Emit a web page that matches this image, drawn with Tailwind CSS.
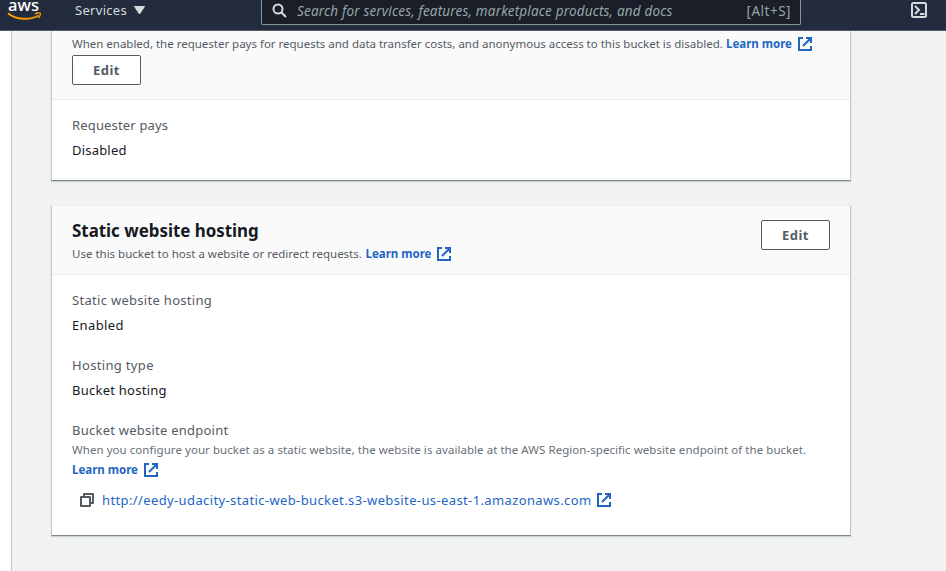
<!DOCTYPE html>
<html lang="en">
<head>
<meta charset="utf-8">
<title>S3 bucket properties</title>
<script src="https://cdn.jsdelivr.net/npm/@tailwindcss/browser@4"></script>
</head>
<body class="w-[946px] h-[571px] overflow-hidden bg-white font-['Noto_Sans',sans-serif] text-[#16191f]">
<svg class="hidden">
  <symbol id="external" viewBox="0 0 14 14"><path d="M5 1H1v12h12V9M8 1h5v5M12.500 1.500L5 9" fill="none" stroke="currentColor" stroke-width="2"/></symbol>
</svg>
<header class="flex h-[31px] bg-[#232c3e] border-b border-[#545b64] overflow-hidden">
  <div class="w-[75px] shrink-0 pl-[7px]">
    <svg class="block" width="36" height="22" viewBox="0 0 36 22">
      <text x="1" y="10.500" font-family="Noto Sans, sans-serif" font-size="16" font-weight="500" fill="#fff" textLength="31" lengthAdjust="spacingAndGlyphs">aws</text>
      <path d="M1 13.200C9 20 23 20.500 31.500 15.500" fill="none" stroke="#f90" stroke-width="2"/>
      <path d="M28 13.800c2-1 5-1 5.300-.5s-.3 3-1.800 4.700" fill="none" stroke="#f90" stroke-width="1.300"/>
    </svg>
  </div>
  <div class="flex w-[186px] shrink-0 gap-[7px] text-[13px] leading-[20px] tracking-[0.3px] text-[#d5dbdb]">
    <span class="w-[52px]">Services</span>
    <svg class="mt-[6px]" width="11" height="9" viewBox="0 0 11 9"><path d="M.5.500h10L5.500 8z" fill="#d5dbdb" stroke="#d5dbdb" stroke-linejoin="round"/></svg>
  </div>
  <div class="flex w-[540px] h-[25px] shrink-0 border border-t-0 border-[#879596] rounded-b-[2px] bg-[#1a1e28] pl-[10px] pr-[9px] text-[13.500px] leading-[22px] text-[#95a5a6]">
    <svg class="mt-[3px] mr-[10px] shrink-0" width="15" height="15" viewBox="0 0 15 15"><g fill="none" stroke="#d5dbdb" stroke-width="2"><circle cx="6" cy="6" r="4.500"/><path d="M9.300 9.300L14 14"/></g></svg>
    <span class="italic whitespace-nowrap tracking-[0.170px]">Search for services, features, marketplace products, and docs</span>
    <span class="ml-auto tracking-[0.500px]">[Alt+S]</span>
  </div>
  <svg class="ml-[110px] mt-[2px] shrink-0" width="16" height="16" viewBox="0 0 16 16"><g fill="none" stroke="#d5dbdb" stroke-width="2"><rect x="1" y="1" width="14" height="14" rx="1.500"/><path d="M4 4l4 4-4 4M9 12h4.500"/></g></svg>
</header>
<main class="ml-[11px] h-[540px] border-l border-[#c3c7c7] bg-[#f1f3f3] pl-[39px]">
  <section class="w-[800px] h-[150px] bg-white border-x border-b border-x-[#c1c8c8] border-b-[#7c8888] shadow-[0_1px_1px_rgba(0,28,36,0.15)]">
    <div class="h-[69px] bg-[#fafafa] border-b border-[#eaeded] px-[20px] pt-[3px]">
      <p class="flex h-[20px] text-[11.500px] leading-[20px] text-[#545b64] whitespace-nowrap">
        <span class="w-[654px] tracking-[-0.010px]">When enabled, the requester pays for requests and data transfer costs, and anonymous access to this bucket is disabled.</span>
        <a class="w-[72px] font-bold text-[#2266c4]">Learn more</a>
        <svg class="mt-[3px] text-[#2266c4]" width="14" height="14"><use href="#external"/></svg>
      </p>
      <button class="mt-[1px] block h-[30px] w-[69px] rounded-[2px] border border-[#545b64] bg-white text-[13px] font-bold leading-[28px] tracking-[0.500px] text-[#545b64]">Edit</button>
    </div>
    <div class="px-[20px] pt-[15px] text-[13px]">
      <div class="leading-[20px] tracking-[0.160px] text-[#545b64]">Requester pays</div>
      <div class="mt-[5px] leading-[20px] tracking-[0.200px]">Disabled</div>
    </div>
  </section>
  <section class="mt-[24px] w-[800px] h-[331px] bg-white border border-t-[#eaeded] border-x-[#c1c8c8] border-b-[#7c8888] shadow-[0_1px_1px_rgba(0,28,36,0.15)]">
    <div class="flex justify-between h-[69px] bg-[#fafafa] border-b border-[#eaeded] pl-[20px] pr-[20px]">
      <div class="pt-[11px]">
        <h2 class="mb-[1px] text-[18px] font-bold leading-[26px] whitespace-nowrap origin-left scale-x-[0.938]">Static website hosting</h2>
        <p class="flex text-[11.500px] leading-[20px] text-[#545b64] whitespace-nowrap">
          <span class="w-[293.500px]">Use this bucket to host a website or redirect requests.</span>
          <a class="w-[71.500px] font-bold text-[#2266c4]">Learn more</a>
          <svg class="mt-[3px] text-[#2266c4]" width="14" height="14"><use href="#external"/></svg>
        </p>
      </div>
      <button class="mt-[14px] block h-[30px] w-[69px] rounded-[2px] border border-[#545b64] bg-white text-[13px] font-bold leading-[28px] tracking-[0.500px] text-[#545b64]">Edit</button>
    </div>
    <div class="flex flex-col gap-[20px] px-[20px] pt-[15px] text-[13px] leading-[20px]">
      <div>
        <div class="tracking-[0.300px] text-[#545b64]">Static website hosting</div>
        <div class="mt-[5px] tracking-[0.380px]">Enabled</div>
      </div>
      <div>
        <div class="tracking-[0.330px] text-[#545b64]">Hosting type</div>
        <div class="mt-[5px] tracking-[0.250px]">Bucket hosting</div>
      </div>
      <div>
        <div class="tracking-[0.240px] text-[#545b64]">Bucket website endpoint</div>
        <p class="text-[11.500px] text-[#687078] whitespace-nowrap tracking-[0.053px]">When you configure your bucket as a static website, the website is available at the AWS Region-specific website endpoint of the bucket.</p>
        <div class="flex text-[11.500px]">
          <a class="w-[72px] font-bold text-[#2266c4]">Learn more</a>
          <svg class="mt-[3px] text-[#2266c4]" width="14" height="14"><use href="#external"/></svg>
        </div>
        <div class="flex mt-[10px] pl-[8px] text-[#2266c4]">
          <svg class="mt-[3px] mr-[8px]" width="14" height="14" viewBox="0 0 14 14"><g fill="none" stroke="#545b64" stroke-width="2"><path d="M1 4h9v9H1zM4 4V1h9v9h-3" stroke-linejoin="round"/></g></svg>
          <a class="w-[495px] whitespace-nowrap tracking-[0.380px]">http://eedy-udacity-static-web-bucket.s3-website-us-east-1.amazonaws.com</a>
          <svg class="mt-[3px]" width="14" height="14"><use href="#external"/></svg>
        </div>
      </div>
    </div>
  </section>
</main>
</body>
</html>
